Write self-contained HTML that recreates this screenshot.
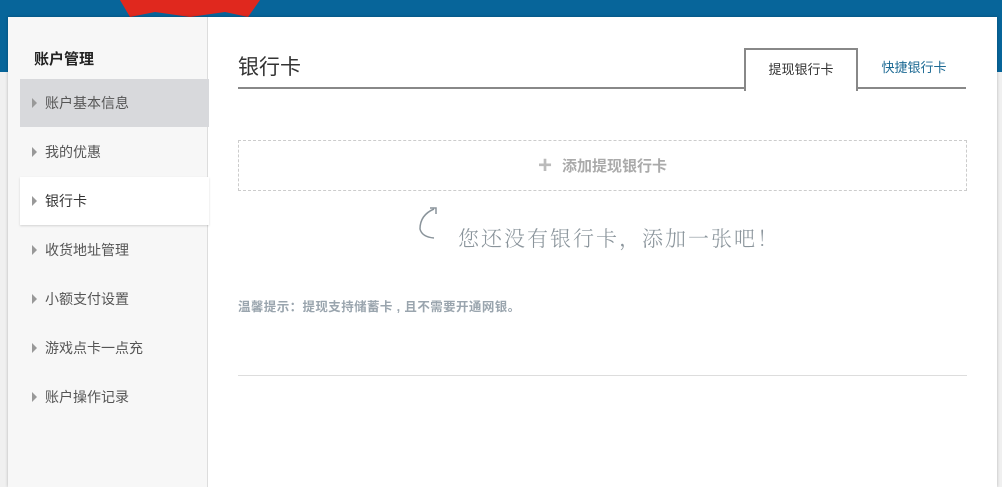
<!DOCTYPE html>
<html><head><meta charset="utf-8"><style>
*{margin:0;padding:0;box-sizing:border-box}
body{width:1002px;height:473px;overflow:hidden;background:#f0f0f0;font-family:"Liberation Sans","Noto Sans CJK SC",sans-serif;position:relative}
.top{position:absolute;left:0;top:0;width:1002px;height:72px;background:#07659a}
.card{position:absolute;left:8px;top:17px;width:989px;height:470px;background:#fff;box-shadow:0 0 3px rgba(0,0,0,.25)}
.side{position:absolute;left:0;top:0;width:200px;height:100%;background:#f7f7f7;border-right:1px solid #ddd}
.side h3{position:absolute;left:26px;top:31px;font-size:15px;font-weight:bold;color:#222}
.item{position:absolute;left:12px;width:189px;height:48px;line-height:48px;font-size:14px;color:#555;padding-left:25px}
.item:before{content:"";position:absolute;left:12px;top:19px;border-left:5px solid #999;border-top:5px solid transparent;border-bottom:5px solid transparent}
.item.g{background:#d8d9dc}
.item.a{background:#fff;color:#333;box-shadow:0 1px 2px rgba(0,0,0,.15);width:189px}
.title{position:absolute;left:230px;top:34px;font-size:21px;color:#333}
.line{position:absolute;left:230px;top:70px;width:728px;height:2px;background:#888}
.tab1{position:absolute;left:736px;top:31px;width:114px;height:43px;background:#fff;border:2px solid #888;border-bottom:none;text-align:center;line-height:40px;font-size:13px;color:#333}
.tab2{position:absolute;left:856px;top:31px;width:100px;line-height:40px;text-align:center;font-size:13px;color:#1d6a94}
.add{position:absolute;left:230px;top:123px;width:729px;height:51px;border:1px dashed #ccc;text-align:center;line-height:49px;font-size:15px;font-weight:bold;color:#aaa}
.add b{font-size:24px;color:#bbb;vertical-align:-2px;margin-right:10px}
.hint{position:absolute;left:450px;top:206px;font-size:21px;color:#8a949b;letter-spacing:2px;font-family:"Liberation Serif","Noto Serif CJK SC",serif;font-weight:300}
.tip{position:absolute;left:230px;top:279px;font-size:12.5px;font-weight:bold;color:#9aa5ae;letter-spacing:.4px}
.hr{position:absolute;left:230px;top:358px;width:729px;height:1px;background:#ddd}
</style></head><body>
<div class="top"></div>
<svg style="position:absolute;left:120px;top:0" width="140" height="18"><path d="M0 0 L140 0 L128 17 L105 12 L70 17 L35 12 L10 17 Z" fill="#e0281e"/></svg>
<div class="card">
 <div class="side">
  <h3>账户管理</h3>
  <div class="item g" style="top:62px">账户基本信息</div>
  <div class="item" style="top:111px">我的优惠</div>
  <div class="item a" style="top:160px">银行卡</div>
  <div class="item" style="top:209px">收货地址管理</div>
  <div class="item" style="top:258px">小额支付设置</div>
  <div class="item" style="top:307px">游戏点卡一点充</div>
  <div class="item" style="top:356px">账户操作记录</div>
 </div>
 <div class="title">银行卡</div>
 <div class="line"></div>
 <div class="tab1">提现银行卡</div>
 <div class="tab2">快捷银行卡</div>
 <div class="add"><b>+</b>添加提现银行卡</div>
 <svg style="position:absolute;left:408px;top:188px" width="30" height="36"><path d="M18 4 Q4 10 4 24 Q6 32 18 33" fill="none" stroke="#8a949b" stroke-width="1.5"/><path d="M14 3 L20 3 L20 9" fill="none" stroke="#8a949b" stroke-width="1.5"/></svg>
 <div class="hint">您还没有银行卡，添加一张吧！</div>
 <div class="tip">温馨提示：提现支持储蓄卡 , 且不需要开通网银。</div>
 <div class="hr"></div>
</div>
</body></html>
